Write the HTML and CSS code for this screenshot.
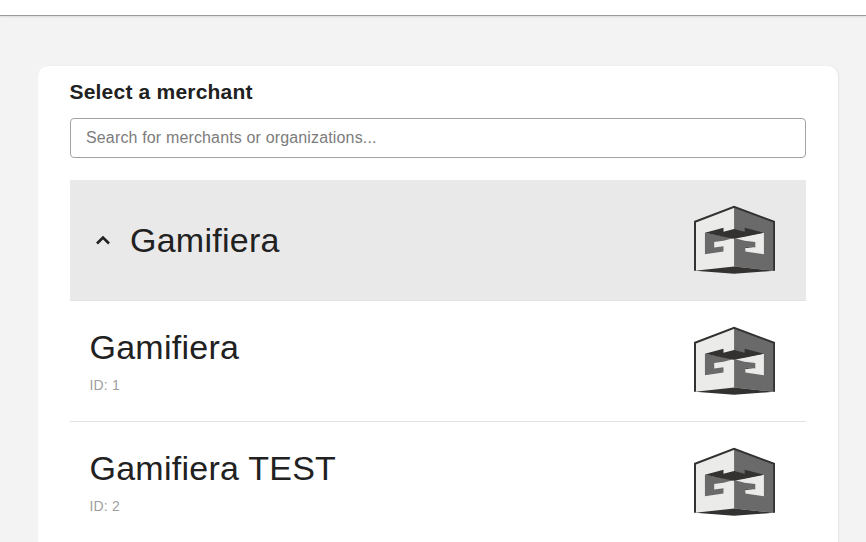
FILE: index.html
```html
<!DOCTYPE html>
<html lang="en">
<head>
<meta charset="utf-8">
<title>Select a merchant</title>
<link rel="stylesheet" href="styles.css">
</head>
<body>
<svg class="defs" width="0" height="0" aria-hidden="true">
  <symbol id="logo" viewBox="39 30 246 210">
    <polygon fill="#ebecea" points="42,80 160,35 160,215 42,228"/>
    <polygon fill="#6a6a6a" points="160,35 281,80 281,228 160,215"/>
    <polygon fill="#6a6a6a" points="72,113 128,124 160,129 128,137 100,141 100,158 128,154 128,170 72,178"/>
    <polygon fill="#ebecea" points="160,129 192,137 224,141 224,158 194,154 194,170 250,178 250,113 192,124"/>
    <polygon fill="#333230" points="72,113 128,98 128,110 160,102 192,110 192,98 250,113 192,125 160,131 128,125"/>
    <polygon fill="#333230" points="194,154 218,157 194,159"/>
    <polygon fill="#333230" points="42,228 160,215 281,228 160,237"/>
    <polyline fill="none" stroke="#333230" stroke-width="6" points="42,228 42,80 160,35 281,80 281,228"/>
  </symbol>
</svg>
<header class="topbar"></header>
<main class="page">
  <section class="card">
    <h1 class="title">Select a merchant</h1>
    <input class="search" type="text" placeholder="Search for merchants or organizations...">
    <div class="list">
      <div class="row row-group">
        <div class="group-label">
          <svg class="chevron" viewBox="0 0 16 10" aria-hidden="true"><polyline points="2,8.5 8,2.5 14,8.5"/></svg>
          <span class="name">Gamifiera</span>
        </div>
        <svg class="logo"><use href="#logo"/></svg>
      </div>
      <div class="row row-item">
        <div class="info">
          <div class="name">Gamifiera</div>
          <div class="id">ID: 1</div>
        </div>
        <svg class="logo"><use href="#logo"/></svg>
      </div>
      <div class="row row-item">
        <div class="info">
          <div class="name">Gamifiera TEST</div>
          <div class="id">ID: 2</div>
        </div>
        <svg class="logo"><use href="#logo"/></svg>
      </div>
    </div>
  </section>
</main>
</body>
</html>
```
FILE: styles.css
```css
* { box-sizing: border-box; }
html, body { margin: 0; height: 100%; overflow: hidden; }
body { background: #f3f3f3; font-family: "Liberation Sans", Arial, sans-serif; color: #212121; }
.defs { position: absolute; }
.topbar { height: 16px; background: #fff; border-bottom: 1px solid #9a9a9a; box-shadow: 0 1px 2px rgba(0,0,0,.1); }
.page { padding: 50px 28px 0 38px; }
.card { background: #fff; border-radius: 10px; padding: 12px 32px 0; box-shadow: 1px 0 2px rgba(0,0,0,.06); min-height: 600px; }
.title { margin: 0 0 12px -.5px; font-size: 21px; line-height: 28px; font-weight: 700; letter-spacing: .2px; }
.search { display: block; width: 100%; height: 40px; padding: 0 15px; border: 1px solid #a3a3a3; border-radius: 4px; font: 16px "Liberation Sans", Arial, sans-serif; letter-spacing: .15px; color: #212121; background: #fff; outline: none; }
.search::placeholder { color: #7c7c7c; opacity: 1; }
.list { margin-top: 22px; }
.row { display: flex; align-items: center; justify-content: space-between; height: 121px; padding: 0 31px 0 19.5px; border-bottom: 1px solid #e3e3e3; }
.row-group { background: #e9e9e9; }
.group-label { display: flex; align-items: center; gap: 19px; margin-left: 5.5px; }
.chevron { width: 16px; height: 10px; fill: none; stroke: #212121; stroke-width: 2.6; }
.name { font-size: 34px; line-height: 40px; letter-spacing: .25px; }
.id { margin-top: 8px; font-size: 14px; line-height: 20px; letter-spacing: .15px; color: #9e9e9e; }
.logo { width: 81.5px; height: 70px; flex: none; }
```
